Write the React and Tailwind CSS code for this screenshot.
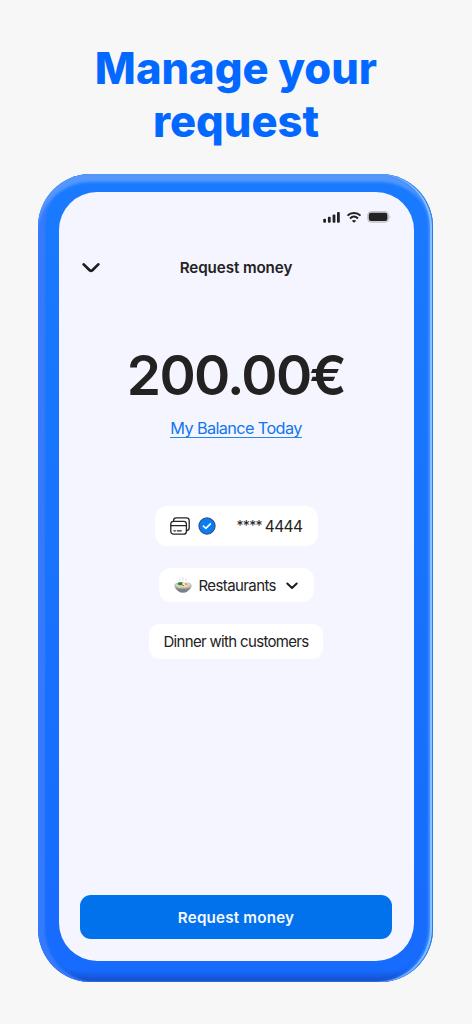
function SignalIcon() {
  return (
    <svg width="17" height="12" viewBox="0 0 17 12" fill="#222">
      <rect x="0.2" y="7.7" width="2.8" height="4" rx="1" />
      <rect x="4.9" y="5.7" width="2.8" height="6" rx="1" />
      <rect x="9.6" y="3.4" width="2.8" height="8.3" rx="1" />
      <rect x="14" y="0.9" width="2.8" height="10.8" rx="1" />
    </svg>
  );
}

function WifiIcon() {
  return (
    <svg width="16" height="12" viewBox="0 0 16 12" fill="none" stroke="#222" strokeWidth="2">
      <path d="M1.500 4.600C5 1 11 1 14.500 4.600" />
      <path d="M4 7.400c2.400-2.200 5.600-2.200 8 0" />
      <path d="M8 11.800 5.800 9.700c1.200-1.100 3.200-1.100 4.400 0Z" fill="#222" stroke="none" />
    </svg>
  );
}

function BatteryIcon() {
  return (
    <svg width="24" height="12" viewBox="0 0 24 12">
      <rect x="0.7" y="0.6" width="20.8" height="10.6" rx="3.4" fill="#d8d8dc" stroke="#c0c0c5" strokeWidth="1" />
      <rect x="1.8" y="1.8" width="18.6" height="8.2" rx="2.2" fill="#222" />
      <path d="M22.600 4.400c1.100.5 1.100 2.700 0 3.200Z" fill="#b5b5ba" />
    </svg>
  );
}

function CardsIcon() {
  return (
    <svg width="20" height="18" viewBox="0 0 20 18" fill="none" stroke="#252525" strokeWidth="1.300" strokeLinecap="round">
      <path d="M3.600 4.200V3.400C3.600 1.700 4.600.8 6.200.8h10.200c1.800 0 2.800 1 2.800 2.800v7.200c0 1.800-1 2.800-2.600 2.800" />
      <rect x="0.8" y="4.3" width="15.6" height="12.9" rx="2.8" />
      <path d="M.8 8.600h15.600M3.900 13.800h1.500M7.300 13.800h4" />
    </svg>
  );
}

function VerifiedIcon() {
  return (
    <svg width="18" height="18" viewBox="0 0 18 18" fill="none">
      <circle cx="9" cy="9" r="8.1" fill="#087df4" stroke="#2c5484" strokeWidth="1.100" />
      <path d="m5.400 9.100 2.500 2.300 4.500-4.500" stroke="#fff" strokeWidth="1.600" strokeLinecap="round" strokeLinejoin="round" />
    </svg>
  );
}

function BowlIcon() {
  return (
    <svg width="18" height="16" viewBox="0 0 18 16">
      <path d="M6 4C4.700 2.700 6.800 2 5.700.6M9.200 3.800C8 2.400 10 1.600 9 .2M12 4c-1.100-1.200.7-2-.1-3.200" fill="none" stroke="#dadde0" strokeWidth="0.9" />
      <path d="M.4 8.100c0 3.100 2 5.300 4.600 6.400.4 1.300 7.600 1.300 8 0 2.600-1.100 4.600-3.300 4.600-6.400Z" fill="#a4a7a9" />
      <path d="M2 10.800c3.500 1.700 10.500 1.700 14 0-.7 1.600-1.800 2.800-3 3.700-.4 1.300-7.600 1.300-8 0-1.300-.7-2.400-2.100-3-3.700Z" fill="#7d8183" />
      <ellipse cx="9" cy="8" rx="8.5" ry="3.1" fill="#c2c4c4" />
      <ellipse cx="9" cy="7.8" rx="7" ry="2.3" fill="#e8d4a5" />
      <path d="M3.300 7.300c.8-2.400 3.400-2.400 5.200-1.700l.2 2.200-2.900.5Z" fill="#23843a" />
      <path d="m8.500 5.500 4.200-.4 2 2.300-3 1.300-3-1Z" fill="#f0ead9" />
      <path d="m10.500 6.400 2.800.2.500.9-2.300.3ZM8 8l1.700.1.500.8-1.900.1Z" fill="#d4683b" />
    </svg>
  );
}

function Chevron({ size, stroke }) {
  const small = size === "small";
  return (
    <svg width={small ? 12 : 18} height={small ? 8 : 10} viewBox={small ? "0 0 12 8" : "0 0 18 10"} fill="none" stroke="#1d1d1f" strokeWidth={stroke} strokeLinecap="round" strokeLinejoin="round">
      <path d={small ? "m1.300 1.500 4.700 4.500 4.700-4.500" : "m1.700 1.400 6.200 6.100q1.100.9 2.200 0l6.200-6.100"} />
    </svg>
  );
}

export default function App() {
  return (
    <main className="flex h-[1024px] w-[472px] flex-col overflow-hidden bg-[#f7f7f7] font-['Inter',sans-serif] text-[#232122]">
      <h1 className="mt-[42px] h-[132px] shrink-0 text-center text-[43.5px] leading-[53px] font-extrabold tracking-normal text-[#0268ff]">
        Manage your
        <br />
        request
      </h1>
      <div className="ml-[38px] h-[808px] w-[395px] shrink-0 rounded-[53px] bg-[linear-gradient(180deg,#197aff_0%,#176bfd_98.5%,#1552d2_100%)] pt-[18px] pl-[20.5px] shadow-[inset_-1px_0_0_#2878e8,inset_-3px_0_1px_#8cc4ff,inset_-5px_0_2px_#3989ff,inset_0_9px_3px_-1px_#5598fa,inset_8px_0_2px_-1px_#357afe,inset_0_-6px_5px_-3px_#1a50cc]">
        <section className="flex h-[769px] w-[355px] flex-col items-center rounded-[38px] bg-[#f4f5fe]">
          <div className="flex h-[49px] w-full items-center pl-[264.5px]">
            <SignalIcon />
            <span className="ml-[6px]"><WifiIcon /></span>
            <span className="ml-[5px]"><BatteryIcon /></span>
          </div>
          <header className="grid h-[53px] w-full grid-cols-[64px_1fr_64px] items-center">
            <button className="pl-[23px]" aria-label="Close">
              <Chevron size="large" stroke="2.700" />
            </button>
            <h2 className="pt-[1px] text-center text-[15.2px] leading-5 font-semibold tracking-[-0.1px]">Request money</h2>
          </header>
          <div className="mt-[47px] h-[69px] text-[55px] leading-[68px] font-semibold tracking-[-1.7px] whitespace-nowrap">
            200.00<span className="-ml-[1px]">€</span>
          </div>
          <a className="mt-[8px] h-[20px] border-b border-[#2586ee] text-[16.3px] leading-[20px] tracking-[-0.62px] text-[#1176ec]">My Balance Today</a>
          <div className="mt-[68px] flex h-[40px] w-[163px] items-center rounded-[12px] bg-white pl-[15px]">
            <CardsIcon />
            <span className="ml-[8px]"><VerifiedIcon /></span>
            <span className="mt-[2px] ml-[21px] flex gap-[3px] text-[15.5px]">
              <span className="text-[14px] tracking-[-0.7px]">****</span>
              <span className="tracking-[-0.6px]">4444</span>
            </span>
          </div>
          <button className="mt-[22px] flex h-[34px] w-[155px] items-center rounded-[12px] bg-white pl-[15px]">
            <BowlIcon />
            <span className="mt-[2px] mr-[10.5px] ml-[7px] w-[77px] text-left text-[15px] tracking-[-0.6px]">Restaurants</span>
            <span className="mt-[2px]"><Chevron size="small" stroke="2" /></span>
          </button>
          <div className="mt-[22px] flex h-[35px] w-[174px] items-center justify-center rounded-[11px] bg-white pt-[2px] text-[15px] tracking-[-0.67px] whitespace-nowrap">
            Dinner with customers
          </div>
          <button className="mt-auto mb-[22px] h-[44px] w-[311.5px] shrink-0 rounded-[11px] bg-[#0272ec] pt-[2px] text-[15.2px] font-semibold tracking-[0.2px] text-[#f5f8ff]">Request money</button>
        </section>
      </div>
    </main>
  );
}
